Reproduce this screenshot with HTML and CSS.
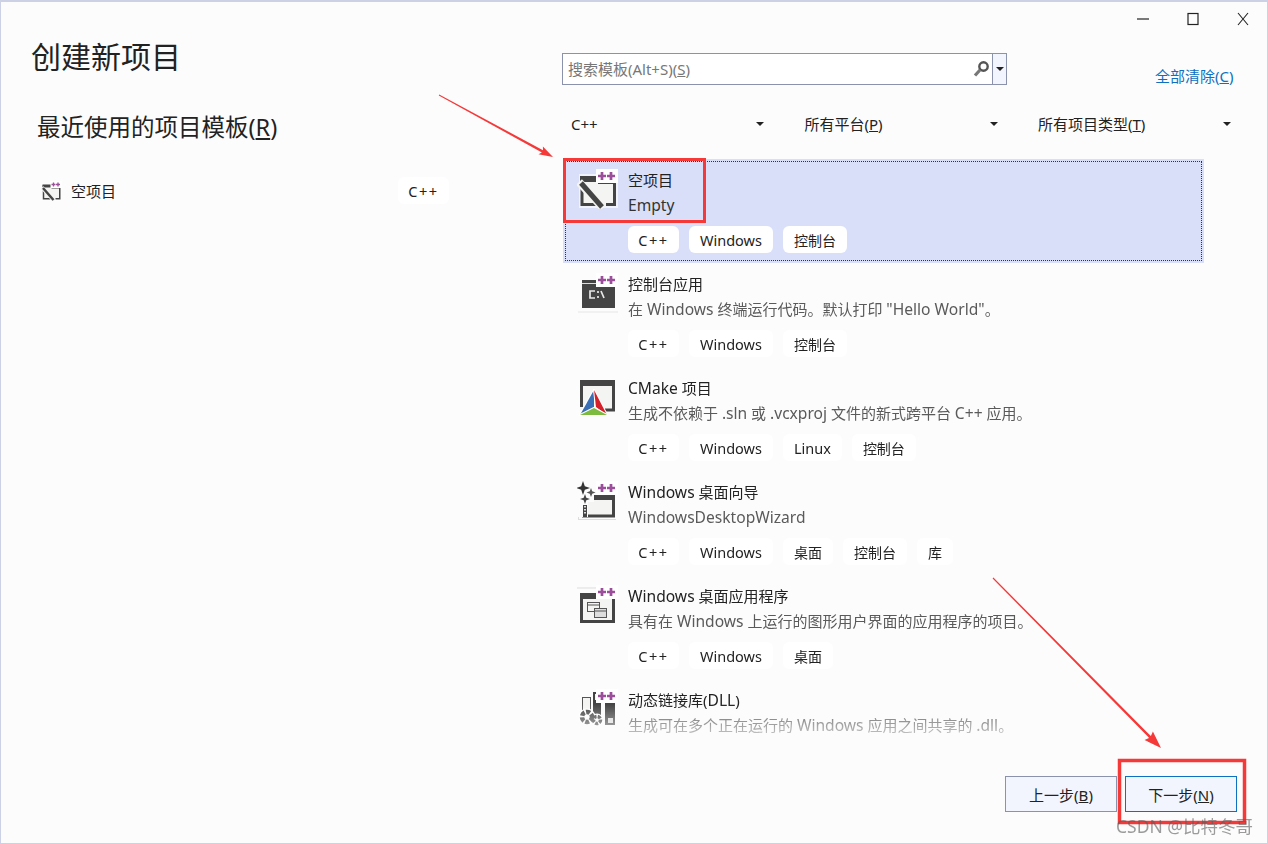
FILE: index.html
```html
<!DOCTYPE html>
<html lang="zh-CN">
<head>
<meta charset="UTF-8">
<title>创建新项目</title>
<link rel="stylesheet" href="styles.css">
</head>
<body>
<svg class="sprite" width="0" height="0">
    <symbol id="plus" viewBox="0 0 42 40">
        <rect x="19" y="0" width="22" height="14" fill="#fff"/>
        <path d="M25 3v8M21 7h8M34 3v8M30 7h8" stroke="#9b4f9b" stroke-width="2.700" fill="none"/>
    </symbol>
    <symbol id="empty" viewBox="0 0 42 40">
        <rect x="2" y="5" width="39" height="34" fill="#fff" opacity=".6"/>
        <rect x="4" y="7" width="35" height="30" fill="#f4f4f2"/>
        <rect x="3" y="7" width="18" height="6" fill="#444"/>
        <path d="M21 13.500h17M37.500 13v24M5 8v29M4 35.500h15M29 35.500h10" stroke="#444" stroke-width="3" fill="none"/>
        <path d="M2 13l24 26" stroke="#f4f4f2" stroke-width="8"/>
        <path d="M4 14l21 24" stroke="#444" stroke-width="5"/>
        <use href="#plus"/>
    </symbol>
</svg>

<div class="window">
    <div class="left">
        <h1>创建新项目</h1>
        <h2>最近使用的项目模板(<u>R</u>)</h2>
        <div class="recent">
            <svg class="recent-icon" width="21" height="20"><use href="#empty"/></svg>
            <span class="recent-name">空项目</span>
            <span class="tag tag-cpp">C++</span>
        </div>
    </div>

    <div class="right">
        <div class="titlebar">
            <svg width="14" height="14" viewBox="0 0 14 14"><path d="M1 7h12" stroke="#222" stroke-width="1.200"/></svg>
            <svg width="14" height="14" viewBox="0 0 14 14"><rect x="2" y="1.500" width="10" height="11" fill="none" stroke="#222" stroke-width="1.200"/></svg>
            <svg width="14" height="14" viewBox="0 0 14 14"><path d="M2 1l10 12M12 1L2 13" stroke="#222" stroke-width="1.100"/></svg>
        </div>

        <div class="search-row">
            <div class="search">
                <span class="search-text">搜索模板(Alt+S)(<u>S</u>)</span>
                <svg class="search-icon" width="18" height="18" viewBox="0 0 18 18">
                    <circle cx="11.500" cy="6.500" r="4.200" fill="none" stroke="#555" stroke-width="2.400"/>
                    <path d="M8 10l-5 5.500" stroke="#777" stroke-width="3.200"/>
                </svg>
                <span class="search-drop"><i class="caret"></i></span>
            </div>
            <a class="clear-all">全部清除(<u>C</u>)</a>
        </div>

        <div class="filters">
            <div class="filter"><span>C++</span><i class="caret"></i></div>
            <div class="filter"><span class="filter-cjk">所有平台(<u>P</u>)</span><i class="caret"></i></div>
            <div class="filter"><span class="filter-cjk">所有项目类型(<u>T</u>)</span><i class="caret"></i></div>
        </div>

        <div class="list">
            <div class="item selected">
                <svg class="item-icon" width="42" height="40"><use href="#empty"/></svg>
                <div class="item-body">
                    <div class="item-title">空项目</div>
                    <div class="item-desc"><span class="en">Empty</span></div>
                    <div class="tags"><span class="tag tag-cpp">C++</span><span class="tag">Windows</span><span class="tag tag-cjk">控制台</span></div>
                </div>
            </div>

            <div class="item">
                <svg class="item-icon" width="42" height="40" viewBox="0 0 42 40">
                    <rect x="5" y="7" width="33" height="28" fill="#444"/>
                    <path d="M5 10.500h32" stroke="#ddd" stroke-width="1"/>
                    <path d="M1 39h40" stroke="#e6e6e6" stroke-width="1"/>
                    <path d="M18 18h-5v7h5M21 18v2M21 23v2M24 18l3 7" stroke="#e8e8e8" stroke-width="1.700" fill="none"/>
                    <use href="#plus"/>
                </svg>
                <div class="item-body">
                    <div class="item-title">控制台应用</div>
                    <div class="item-desc">在 <span class="en">Windows</span> 终端运行代码。默认打印 <span class="en">"Hello World"</span>。</div>
                    <div class="tags"><span class="tag tag-cpp">C++</span><span class="tag">Windows</span><span class="tag tag-cjk">控制台</span></div>
                </div>
            </div>

            <div class="item">
                <svg class="item-icon" width="42" height="40" viewBox="0 0 42 40">
                    <rect x="3" y="3" width="35" height="30" fill="#f4f4f2"/>
                    <path d="M4.500 3v27M36.500 3v30H28" stroke="#444" stroke-width="3" fill="none"/>
                    <rect x="3" y="3" width="35" height="6" fill="#444"/>
                    <g stroke="#fff" stroke-width="2" stroke-linejoin="round" paint-order="stroke">
                        <path d="M17 13L3 38l14-7z" fill="#3a6eb5"/>
                        <path d="M17 13l13 25-11-8z" fill="#d5202a"/>
                        <path d="M3 38l14-7 13 7z" fill="#7cbb3f"/>
                    </g>
                </svg>
                <div class="item-body">
                    <div class="item-title"><span class="en">CMake</span> 项目</div>
                    <div class="item-desc">生成不依赖于 <span class="en">.sln</span> 或 <span class="en">.vcxproj</span> 文件的新式跨平台 <span class="en">C++</span> 应用。</div>
                    <div class="tags"><span class="tag tag-cpp">C++</span><span class="tag">Windows</span><span class="tag">Linux</span><span class="tag tag-cjk">控制台</span></div>
                </div>
            </div>

            <div class="item">
                <svg class="item-icon" width="42" height="40" viewBox="0 0 42 40">
                    <rect x="5" y="14" width="33" height="22" fill="#f4f4f2"/>
                    <rect x="5" y="14" width="33" height="5" fill="#444"/>
                    <path d="M36.500 17v18H6.500V17" stroke="#444" stroke-width="3" fill="none"/>
                    <path d="M1 38.500h38M1.500 22v16" stroke="#ddd" stroke-width="1" fill="none"/>
                    <path d="M0 0h17v21H11v15H0z" fill="#fcfcfd"/>
                    <path d="M6 0l1.800 5.200L13 7l-5.200 1.800L6 14l-1.800-5.200L-1 7l5.200-1.800z" fill="#333"/>
                    <path d="M14 7l1.200 3.300 3.300 1.200-3.300 1.200L14 16l-1.200-3.300-3.300-1.200 3.300-1.200z" fill="#555"/>
                    <path d="M8 13l1.300 3.700L13 18l-3.700 1.300L8 23l-1.300-3.700L3 18l3.700-1.300z" fill="#444"/>
                    <path d="M8 24v12" stroke="#444" stroke-width="4"/>
                    <path d="M8 25v9" stroke="#ddd" stroke-width="2" stroke-dasharray="1.500 1.500"/>
                    <use href="#plus"/>
                </svg>
                <div class="item-body">
                    <div class="item-title"><span class="en">Windows</span> 桌面向导</div>
                    <div class="item-desc"><span class="en">WindowsDesktopWizard</span></div>
                    <div class="tags"><span class="tag tag-cpp">C++</span><span class="tag">Windows</span><span class="tag tag-cjk">桌面</span><span class="tag tag-cjk">控制台</span><span class="tag tag-cjk">库</span></div>
                </div>
            </div>

            <div class="item">
                <svg class="item-icon" width="42" height="40" viewBox="0 0 42 40">
                    <path d="M0 3h24" stroke="#ddd" stroke-width="1"/>
                    <rect x="3" y="8" width="35" height="30" fill="#f4f4f2"/>
                    <path d="M4.500 8v28.500h32V14" stroke="#444" stroke-width="3" fill="none"/>
                    <rect x="3" y="8" width="22" height="6" fill="#444"/>
                    <rect x="10.500" y="17.500" width="12" height="9" fill="#f4f4f2" stroke="#555"/>
                    <path d="M10.500 20h12" stroke="#555"/>
                    <rect x="17.500" y="23.500" width="12" height="9" fill="#ddd" stroke="#555"/>
                    <path d="M17.500 26h12" stroke="#555"/>
                    <use href="#plus"/>
                </svg>
                <div class="item-body">
                    <div class="item-title"><span class="en">Windows</span> 桌面应用程序</div>
                    <div class="item-desc">具有在 <span class="en">Windows</span> 上运行的图形用户界面的应用程序的项目。</div>
                    <div class="tags"><span class="tag tag-cpp">C++</span><span class="tag">Windows</span><span class="tag tag-cjk">桌面</span></div>
                </div>
            </div>

            <div class="item">
                <svg class="item-icon" width="42" height="40" viewBox="0 0 42 40">
                    <rect x="5.500" y="8.500" width="8" height="14" fill="#f4f4f2" stroke="#555"/>
                    <path d="M16 3h8v33h-8z" fill="#444"/>
                    <rect x="18" y="5" width="4" height="6" fill="#f4f4f2"/>
                    <rect x="28" y="14" width="10" height="22" fill="#444"/>
                    <rect x="31" y="29" width="5" height="5" fill="#ddd"/>
                    <circle cx="10" cy="28" r="8.500" fill="#fff"/>
                    <circle cx="20" cy="31" r="6.500" fill="#fff"/>
                    <circle cx="10" cy="28" r="5" fill="none" stroke="#444" stroke-width="4.500" stroke-dasharray="4 1.500"/>
                    <circle cx="20" cy="31" r="3.500" fill="none" stroke="#444" stroke-width="3.500" stroke-dasharray="3 1.200"/>
                    <use href="#plus"/>
                </svg>
                <div class="item-body">
                    <div class="item-title">动态链接库(<span class="en">DLL</span>)</div>
                    <div class="item-desc">生成可在多个正在运行的 <span class="en">Windows</span> 应用之间共享的 <span class="en">.dll</span>。</div>
                </div>
            </div>
        </div>

        <div class="footer">
            <button class="btn">上一步(<u>B</u>)</button>
            <button class="btn btn-primary">下一步(<u>N</u>)</button>
        </div>
    </div>

    <!-- red markup drawn on top of the screenshot -->
    <svg class="markup" width="1268" height="844" viewBox="0 0 1268 844">
        <rect x="564.500" y="159.500" width="140" height="62" fill="none" stroke="#f53838" stroke-width="3"/>
        <rect x="1119.500" y="760.500" width="125" height="62" fill="none" stroke="#f53838" stroke-width="3.500"/>
        <polygon points="439.200,94.600 543,150.300 542.900,146.400 553,157 538.500,154.300 541.900,152.400 438.800,95.400" fill="#f53838"/>
        <polygon points="993.400,577.600 1150.900,736.100 1152.900,731.500 1161,748 1144.500,739.900 1149.100,737.900 992.600,578.400" fill="#f53838"/>
    </svg>
    <div class="watermark">CSDN @比特冬哥</div>
</div>
</body>
</html>
```

FILE: styles.css
```css
* {
    box-sizing: border-box;
}
body {
    margin: 0;
    background: #fcfcfd;
    color: #222;
    font-family: "Noto Sans", "Noto Sans CJK SC", sans-serif;
    font-size: 15px;
}
.sprite {
    position: absolute;
}
.window {
    position: relative;
    display: flex;
    width: 1268px;
    height: 844px;
    overflow: hidden;
    border-top: 2px solid #cdd1e6;
    border-left: 1px solid #cdd1e6;
    border-right: 1px solid #cdd1e6;
    border-bottom: 1px solid #cdd1e6;
}

/* left column */
.left {
    width: 561px;
    flex-shrink: 0;
    padding-left: 30px;
}
h1 {
    margin: 33px 0 0;
    font-size: 30px;
    font-weight: 400;
    line-height: 44px;
    color: #222;
}
h2 {
    margin: 30px 0 0 6px;
    font-size: 23.500px;
    font-weight: 400;
    line-height: 36px;
    color: #222;
}
.recent {
    display: flex;
    align-items: center;
    width: 408px;
    margin: 32px 0 0 10px;
}
.recent-icon {
    margin-right: 9px;
}
.recent-name {
    flex: 1;
}

/* right column */
.right {
    flex: 1;
    display: flex;
    flex-direction: column;
}
.titlebar {
    display: flex;
    justify-content: flex-end;
    gap: 36px;
    height: 51px;
    padding: 10px 17px 0 0;
}
.search-row {
    display: flex;
    height: 32px;
}
.search {
    display: flex;
    align-items: center;
    width: 445px;
    height: 32px;
    padding-left: 5px;
    background: #fff;
    border: 1px solid #8a93ab;
}
.search-text {
    flex: 1;
    margin-bottom: 2px;
    color: #777;
}
.search-icon {
    margin-right: 2px;
}
.search-drop {
    display: flex;
    align-items: center;
    justify-content: center;
    width: 14px;
    height: 100%;
    background: #f2f5fd;
    border-left: 1px solid #8a93ab;
}
.clear-all {
    margin: 10px 0 0 148px;
    color: #0e70c0;
    line-height: 26px;
    white-space: nowrap;
}
.filters {
    display: flex;
    gap: 25px;
    margin-top: 26px;
}
.filter {
    display: flex;
    align-items: center;
    justify-content: space-between;
    width: 208.500px;
    height: 26px;
    padding: 0 6.500px 0 9px;
}
.filter-cjk {
    margin-bottom: 2px;
}
.caret {
    width: 0;
    height: 0;
    border-left: 4px solid transparent;
    border-right: 4px solid transparent;
    border-top: 4px solid #222;
}

/* template list */
.list {
    width: 641px;
    height: 576px;
    margin: 22px 0 0 1px;
    overflow: hidden;
    -webkit-mask-image: linear-gradient(to bottom, #000 545px, rgba(0, 0, 0, 0.35) 576px);
    mask-image: linear-gradient(to bottom, #000 545px, rgba(0, 0, 0, 0.35) 576px);
}
.item {
    display: flex;
    height: 104px;
    padding: 9px 0 0 14px;
}
.item.selected {
    background: #d9dff8;
    outline: 1px dotted #333;
    outline-offset: -3px;
}
.item-icon {
    flex-shrink: 0;
    margin: 1px 9px 0 0;
}
.item-title {
    line-height: 25px;
    color: #222;
}
.item-desc {
    line-height: 25px;
    color: #5a5a5a;
}
.selected .item-desc {
    color: #333;
}
.en {
    font-size: 15.600px;
}
.tags {
    display: flex;
    gap: 10px;
    margin-top: 8px;
}
.tag {
    height: 27px;
    padding: 0 11px;
    background: #fff;
    border-radius: 6px;
    font-size: 14.500px;
    line-height: 29px;
}
.tag-cjk {
    font-size: 14px;
}
.tag-cpp {
    width: 51px;
    padding: 0;
    text-align: center;
    letter-spacing: 1.500px;
}

/* buttons */
.footer {
    display: flex;
    justify-content: flex-end;
    gap: 8px;
    margin-top: 41px;
    padding-right: 30px;
}
.btn {
    width: 112px;
    height: 36px;
    padding: 0;
    background: #f2f5fd;
    border: 1px solid #8a93ab;
    color: #222;
    font: inherit;
}
.btn-primary {
    border-color: #0e70c0;
}

/* overlays */
.markup {
    position: absolute;
    top: -2px;
    left: -1px;
    pointer-events: none;
}
.watermark {
    position: absolute;
    top: 811px;
    left: 1115px;
    color: rgba(90, 90, 90, 0.6);
    font-size: 17.500px;
    line-height: 26px;
    white-space: nowrap;
}
```
